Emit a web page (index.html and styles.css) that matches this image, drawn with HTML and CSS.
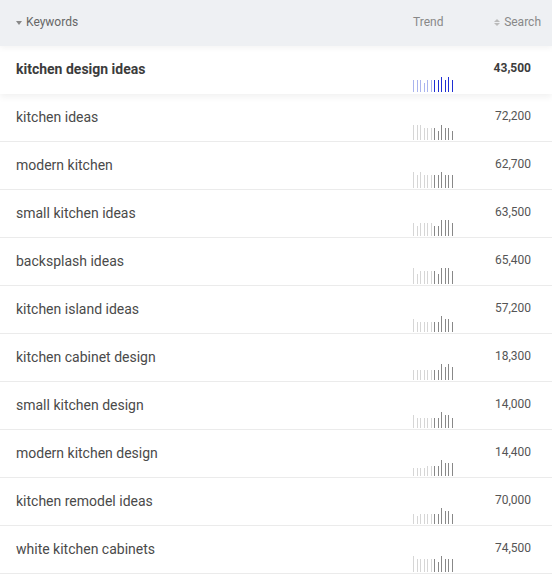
FILE: index.html
```html
<!DOCTYPE html>
<html>
<head>
<meta charset="utf-8">
<link rel="stylesheet" href="styles.css">
</head>
<body>
<div class="table">
  <div class="head">
    <div class="h-kw"><span class="caret"></span>Keywords</div>
    <div class="h-trend">Trend</div>
    <div class="h-search"><span class="sort"><span class="up"></span><span class="down"></span></span>Search</div>
  </div>

  <div class="row active">
    <div class="kw">kitchen design ideas</div>
    <div class="trend"><span class="b l" style="height:12px"></span><span class="b l" style="height:12px"></span><span class="b l" style="height:12px"></span><span class="b l" style="height:9px"></span><span class="b l" style="height:12px"></span><span class="b l" style="height:12px"></span><span class="b d" style="height:12px"></span><span class="b d" style="height:12px"></span><span class="b d" style="height:15px"></span><span class="b d" style="height:12px"></span><span class="b d" style="height:15px"></span><span class="b d" style="height:12px"></span></div>
    <div class="num">43,500</div>
  </div>

  <div class="row">
    <div class="kw">kitchen ideas</div>
    <div class="trend"><span class="b l" style="height:15px"></span><span class="b l" style="height:15px"></span><span class="b l" style="height:15px"></span><span class="b l" style="height:12px"></span><span class="b l" style="height:12px"></span><span class="b l" style="height:12px"></span><span class="b d" style="height:12px"></span><span class="b d" style="height:9px"></span><span class="b d" style="height:15px"></span><span class="b d" style="height:12px"></span><span class="b d" style="height:12px"></span><span class="b d" style="height:9px"></span></div>
    <div class="num">72,200</div>
  </div>

  <div class="row">
    <div class="kw">modern kitchen</div>
    <div class="trend"><span class="b l" style="height:16px"></span><span class="b l" style="height:13px"></span><span class="b l" style="height:16px"></span><span class="b l" style="height:13px"></span><span class="b l" style="height:13px"></span><span class="b l" style="height:13px"></span><span class="b d" style="height:13px"></span><span class="b d" style="height:13px"></span><span class="b d" style="height:16px"></span><span class="b d" style="height:13px"></span><span class="b d" style="height:13px"></span><span class="b d" style="height:13px"></span></div>
    <div class="num">62,700</div>
  </div>

  <div class="row">
    <div class="kw">small kitchen ideas</div>
    <div class="trend"><span class="b l" style="height:13px"></span><span class="b l" style="height:10px"></span><span class="b l" style="height:13px"></span><span class="b l" style="height:13px"></span><span class="b l" style="height:13px"></span><span class="b l" style="height:13px"></span><span class="b d" style="height:10px"></span><span class="b d" style="height:10px"></span><span class="b d" style="height:16px"></span><span class="b d" style="height:16px"></span><span class="b d" style="height:16px"></span><span class="b d" style="height:13px"></span></div>
    <div class="num">63,500</div>
  </div>

  <div class="row">
    <div class="kw">backsplash ideas</div>
    <div class="trend"><span class="b l" style="height:16px"></span><span class="b l" style="height:10px"></span><span class="b l" style="height:13px"></span><span class="b l" style="height:13px"></span><span class="b l" style="height:13px"></span><span class="b l" style="height:13px"></span><span class="b d" style="height:13px"></span><span class="b d" style="height:10px"></span><span class="b d" style="height:16px"></span><span class="b d" style="height:16px"></span><span class="b d" style="height:16px"></span><span class="b d" style="height:13px"></span></div>
    <div class="num">65,400</div>
  </div>

  <div class="row">
    <div class="kw">kitchen island ideas</div>
    <div class="trend"><span class="b l" style="height:13px"></span><span class="b l" style="height:10px"></span><span class="b l" style="height:10px"></span><span class="b l" style="height:10px"></span><span class="b l" style="height:10px"></span><span class="b l" style="height:10px"></span><span class="b d" style="height:10px"></span><span class="b d" style="height:10px"></span><span class="b d" style="height:16px"></span><span class="b d" style="height:13px"></span><span class="b d" style="height:13px"></span><span class="b d" style="height:10px"></span></div>
    <div class="num">57,200</div>
  </div>

  <div class="row">
    <div class="kw">kitchen cabinet design</div>
    <div class="trend"><span class="b l" style="height:10px"></span><span class="b l" style="height:10px"></span><span class="b l" style="height:10px"></span><span class="b l" style="height:10px"></span><span class="b l" style="height:10px"></span><span class="b l" style="height:10px"></span><span class="b d" style="height:10px"></span><span class="b d" style="height:10px"></span><span class="b d" style="height:16px"></span><span class="b d" style="height:13px"></span><span class="b d" style="height:16px"></span><span class="b d" style="height:13px"></span></div>
    <div class="num">18,300</div>
  </div>

  <div class="row">
    <div class="kw">small kitchen design</div>
    <div class="trend"><span class="b l" style="height:13px"></span><span class="b l" style="height:10px"></span><span class="b l" style="height:10px"></span><span class="b l" style="height:10px"></span><span class="b l" style="height:10px"></span><span class="b l" style="height:10px"></span><span class="b d" style="height:10px"></span><span class="b d" style="height:10px"></span><span class="b d" style="height:16px"></span><span class="b d" style="height:13px"></span><span class="b d" style="height:13px"></span><span class="b d" style="height:10px"></span></div>
    <div class="num">14,000</div>
  </div>

  <div class="row">
    <div class="kw">modern kitchen design</div>
    <div class="trend"><span class="b l" style="height:8px"></span><span class="b l" style="height:8px"></span><span class="b l" style="height:8px"></span><span class="b l" style="height:8px"></span><span class="b l" style="height:10px"></span><span class="b l" style="height:10px"></span><span class="b d" style="height:10px"></span><span class="b d" style="height:10px"></span><span class="b d" style="height:16px"></span><span class="b d" style="height:13px"></span><span class="b d" style="height:13px"></span><span class="b d" style="height:13px"></span></div>
    <div class="num">14,400</div>
  </div>

  <div class="row">
    <div class="kw">kitchen remodel ideas</div>
    <div class="trend"><span class="b l" style="height:10px"></span><span class="b l" style="height:8px"></span><span class="b l" style="height:10px"></span><span class="b l" style="height:10px"></span><span class="b l" style="height:10px"></span><span class="b l" style="height:10px"></span><span class="b d" style="height:10px"></span><span class="b d" style="height:10px"></span><span class="b d" style="height:16px"></span><span class="b d" style="height:13px"></span><span class="b d" style="height:13px"></span><span class="b d" style="height:10px"></span></div>
    <div class="num">70,000</div>
  </div>

  <div class="row">
    <div class="kw">white kitchen cabinets</div>
    <div class="trend"><span class="b l" style="height:16px"></span><span class="b l" style="height:13px"></span><span class="b l" style="height:13px"></span><span class="b l" style="height:13px"></span><span class="b l" style="height:13px"></span><span class="b l" style="height:13px"></span><span class="b d" style="height:13px"></span><span class="b d" style="height:10px"></span><span class="b d" style="height:16px"></span><span class="b d" style="height:13px"></span><span class="b d" style="height:13px"></span><span class="b d" style="height:13px"></span></div>
    <div class="num">74,500</div>
  </div>
</div>
</body>
</html>
```

FILE: styles.css
```css
html, body {
  margin: 0;
  padding: 0;
  background: #ffffff;
}

body {
  font-family: Roboto, "Liberation Sans", sans-serif;
  color: #4a4a4a;
}

.table {
  width: 552px;
}

.head,
.row {
  display: grid;
  grid-template-columns: 397px 59px 1fr;
  padding-left: 16px;
}

.head {
  height: 44px;
  padding-bottom: 2px;
  align-items: center;
  background: #eef0f3;
  font-size: 12px;
  color: #7a7a7a;
  position: relative;
  z-index: 2;
  box-shadow: 0 2px 6px rgba(0, 0, 0, 0.05);
}

.h-kw {
  display: flex;
  align-items: center;
  color: #666;
}

.caret {
  width: 0;
  height: 0;
  border-left: 3.5px solid transparent;
  border-right: 3.5px solid transparent;
  border-top: 4px solid #888;
  margin-right: 4px;
  margin-top: 1px;
}

.h-trend {
  color: #888;
}

.h-search {
  display: flex;
  align-items: center;
  justify-content: flex-end;
  padding-right: 11px;
  color: #888;
}

.sort {
  display: flex;
  flex-direction: column;
  gap: 1px;
  margin-right: 4px;
}

.sort .up {
  width: 0;
  height: 0;
  border-left: 3px solid transparent;
  border-right: 3px solid transparent;
  border-bottom: 3.5px solid #bbb;
}

.sort .down {
  width: 0;
  height: 0;
  border-left: 3px solid transparent;
  border-right: 3px solid transparent;
  border-top: 3.5px solid #bbb;
}

.row {
  height: 47px;
  border-bottom: 1px solid #ebebeb;
  background: #fff;
}

.row.active {
  position: relative;
  z-index: 1;
  border-bottom-color: transparent;
  box-shadow: 0 3px 7px rgba(0, 0, 0, 0.06);
}

.kw {
  align-self: center;
  font-size: 14px;
  color: #4a4a4a;
  margin-top: -2px;
}

.active .kw {
  font-weight: 700;
  color: #3c3c3c;
}

.trend {
  align-self: end;
  display: flex;
  align-items: flex-end;
  gap: 2.5px;
  padding-bottom: 1px;
}

.b {
  display: block;
  width: 1px;
  flex: none;
}

.b.l {
  background: #d6d6d6;
}

.b.d {
  background: #888;
}

.active .b.l {
  background: #aab4ee;
}

.active .b.d {
  background: #1f2fd4;
}

.num {
  align-self: center;
  text-align: right;
  padding-right: 21px;
  font-size: 12px;
  color: #555;
  margin-top: -3px;
}

.active .num {
  font-weight: 700;
  color: #3c3c3c;
}
```
